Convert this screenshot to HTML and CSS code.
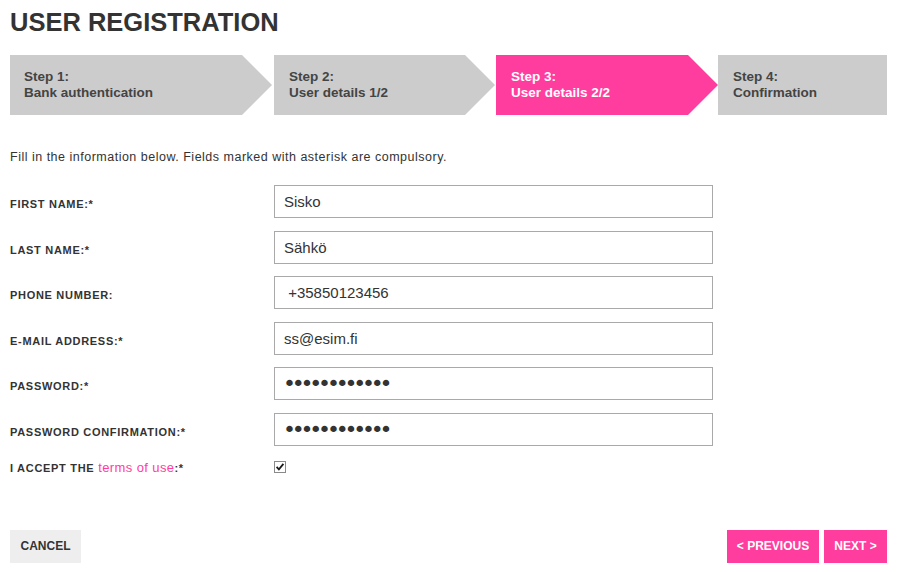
FILE: index.html
```html
<!DOCTYPE html>
<html lang="fi">
<head>
<meta charset="utf-8">
<title>User registration</title>
<link rel="stylesheet" href="styles.css">
</head>
<body>
<div class="page">
  <h1 class="title">USER REGISTRATION</h1>

  <ol class="steps">
    <li class="step step-1 arrow"><span>Step 1:</span><span>Bank authentication</span></li>
    <li class="step step-2 arrow"><span>Step 2:</span><span>User details 1/2</span></li>
    <li class="step step-3 arrow active"><span>Step 3:</span><span>User details 2/2</span></li>
    <li class="step step-4"><span>Step 4:</span><span>Confirmation</span></li>
  </ol>

  <p class="intro">Fill in the information below. Fields marked with asterisk are compulsory.</p>

  <form class="form">
    <div class="row">
      <label class="label" for="fn">FIRST NAME:*</label>
      <input class="field" id="fn" type="text" value="Sisko">
    </div>
    <div class="row">
      <label class="label" for="ln">LAST NAME:*</label>
      <input class="field" id="ln" type="text" value="Sähkö">
    </div>
    <div class="row">
      <label class="label" for="ph">PHONE NUMBER:</label>
      <input class="field" id="ph" type="text" value=" +35850123456">
    </div>
    <div class="row">
      <label class="label" for="em">E-MAIL ADDRESS:*</label>
      <input class="field" id="em" type="text" value="ss@esim.fi">
    </div>
    <div class="row">
      <label class="label" for="pw">PASSWORD:*</label>
      <input class="field pass" id="pw" type="password" value="salasana1234">
    </div>
    <div class="row">
      <label class="label" for="pw2">PASSWORD CONFIRMATION:*</label>
      <input class="field pass" id="pw2" type="password" value="salasana1234">
    </div>
    <div class="row row-check">
      <span class="label">I ACCEPT THE <a class="terms" href="#">terms of use</a>:*</span>
      <span class="checkbox" role="checkbox" aria-checked="true">
        <svg width="12" height="12" viewBox="0 0 12 12"><rect x="0.5" y="0.5" width="11" height="11" fill="#fff" stroke="#8a8a8a"/><path d="M2.6 5.8 L4.9 8.3 L9.4 2.9" fill="none" stroke="#1a1a1a" stroke-width="1.8"/></svg>
      </span>
    </div>
  </form>

  <div class="actions">
    <button class="btn btn-cancel" type="button">CANCEL</button>
    <div class="nav">
      <button class="btn btn-pink btn-prev" type="button">&lt; PREVIOUS</button>
      <button class="btn btn-pink btn-next" type="button">NEXT &gt;</button>
    </div>
  </div>
</div>
</body>
</html>
```

FILE: styles.css
```css
* { box-sizing: border-box; }

html, body {
  margin: 0;
  padding: 0;
  background: #fff;
}

body {
  font-family: "Liberation Sans", Arial, sans-serif;
  color: #333;
}

.page {
  width: 878px;
  margin-left: 10px;
  padding-top: 7px;
}

.title {
  margin: 0;
  font-size: 25.5px;
  line-height: 30px;
  font-weight: bold;
  color: #333;
}

.steps {
  list-style: none;
  margin: 18px 0 0 0;
  padding: 0;
  display: flex;
  height: 60px;
}

.step {
  display: flex;
  flex-direction: column;
  justify-content: center;
  padding-left: 14px;
  background: #cccccc;
  color: #444;
  font-weight: bold;
  font-size: 13.5px;
  line-height: 16px;
  flex: none;
}

.step.arrow {
  clip-path: polygon(0 0, calc(100% - 30px) 0, 100% 50%, calc(100% - 30px) 100%, 0 100%);
}

.step-1 { width: 262px; }
.step-2 { width: 221px; margin-left: 2px; padding-left: 15px; }
.step-3 { width: 222px; margin-left: 1px; padding-left: 15px; }
.step-4 { width: 169px; padding-left: 15px; }

.step.active {
  background: #ff3d9f;
  color: #fff;
}

.intro {
  margin: 35px 0 0 0;
  font-size: 12.5px;
  letter-spacing: 0.5px;
  line-height: 14px;
  color: #333;
}

.form {
  margin-top: 21px;
  display: flex;
  flex-direction: column;
  gap: 12.6px;
}

.row {
  display: flex;
  align-items: center;
}

.label {
  width: 264px;
  flex: none;
  font-size: 11px;
  font-weight: bold;
  letter-spacing: 0.7px;
  color: #333;
  padding-top: 5px;
  white-space: nowrap;
}

.field {
  width: 439px;
  height: 33px;
  margin: 0;
  border: 1px solid #a9a9a9;
  border-radius: 0;
  padding: 0 0 0 9px;
  font-family: "Liberation Sans", Arial, sans-serif;
  font-size: 15px;
  color: #333;
  background: #fff;
  outline: none;
}

.field.pass {
  font-family: "DejaVu Sans", sans-serif;
  font-size: 22px;
  letter-spacing: -4.2px;
  padding-left: 8px;
  color: #333;
}

.row-check {
  margin-top: 1px;
}

.row-check .label {
  padding-top: 0;
}

.terms {
  color: #ff3d9f;
  font-weight: normal;
  font-size: 13px;
  letter-spacing: 0.4px;
  text-decoration: none;
}

.checkbox {
  display: block;
  width: 12px;
  height: 12px;
}

.checkbox svg { display: block; }

.actions {
  margin-top: 55px;
  display: flex;
  justify-content: space-between;
  align-items: center;
  width: 877px;
}

.nav {
  display: flex;
  gap: 5px;
}

.btn {
  height: 33px;
  border: 0;
  margin: 0;
  padding: 0;
  font-family: "Liberation Sans", Arial, sans-serif;
  font-size: 12px;
  font-weight: bold;
  white-space: nowrap;
  cursor: pointer;
}

.btn-cancel {
  width: 71px;
  background: #eeeeee;
  color: #333;
}

.btn-pink {
  background: #ff3d9f;
  color: #fff;
}

.btn-prev { width: 92px; }
.btn-next { width: 63px; }
```
